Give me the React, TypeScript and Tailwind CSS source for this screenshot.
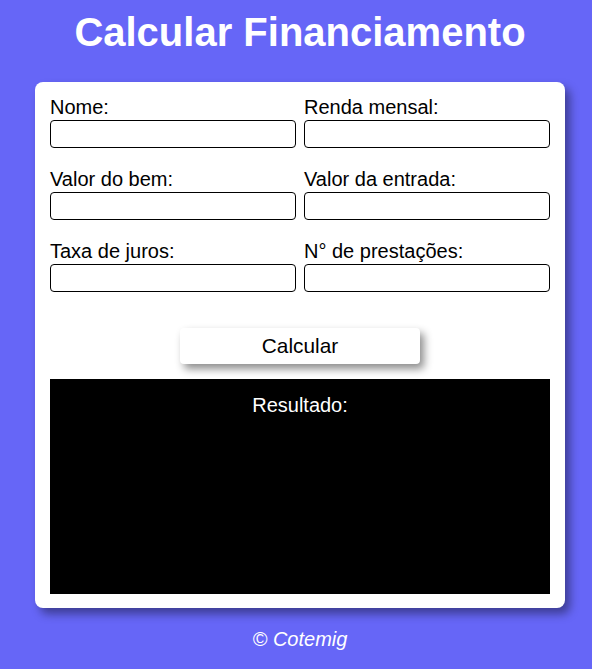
import React from 'react';

const fields = [
  ['Nome:', 'Renda mensal:'],
  ['Valor do bem:', 'Valor da entrada:'],
  ['Taxa de juros:', 'N° de prestações:'],
];

export default function App() {
  return (
    <div className="min-h-[669px] bg-[#6666f7] pl-[8px] flex flex-col items-center font-['Liberation_Sans',Arial,sans-serif]">
      {/* Title */}
      <h1 className="text-[40px] font-bold text-white leading-none mt-[12px] mb-[30px]">
        Calcular Financiamento
      </h1>

      {/* Card */}
      <div className="w-[530px] bg-white rounded-lg px-[15px] pt-[14px] pb-[14px] shadow-[5px_6px_10px_rgba(0,0,0,0.4)]">
        <div className="flex flex-col gap-[20px]">
          {fields.map((row) => (
            <div key={row[0]} className="grid grid-cols-2 gap-[8px]">
              {row.map((label) => (
                <label key={label} className="flex flex-col">
                  <span className="text-[20px] leading-[23px] text-black mb-[1px]">{label}</span>
                  <input
                    type="text"
                    className="h-[28px] border border-black rounded-[4px] px-2 text-[14px] outline-none"
                  />
                </label>
              ))}
            </div>
          ))}
        </div>

        <div className="flex justify-center mt-[36px] mb-[15px]">
          <button className="w-[240px] h-[36px] bg-white rounded-[4px] text-[20.8px] leading-[24px] text-black shadow-[4px_5px_8px_rgba(0,0,0,0.45)]">
            Calcular
          </button>
        </div>

        <div className="h-[215px] bg-black text-white text-center text-[20px] leading-[23px] pt-[15px]">
          Resultado:
        </div>
      </div>

      {/* Footer */}
      <p className="mt-[20px] text-[20px] leading-[23px] italic text-white">© Cotemig</p>
    </div>
  );
}
